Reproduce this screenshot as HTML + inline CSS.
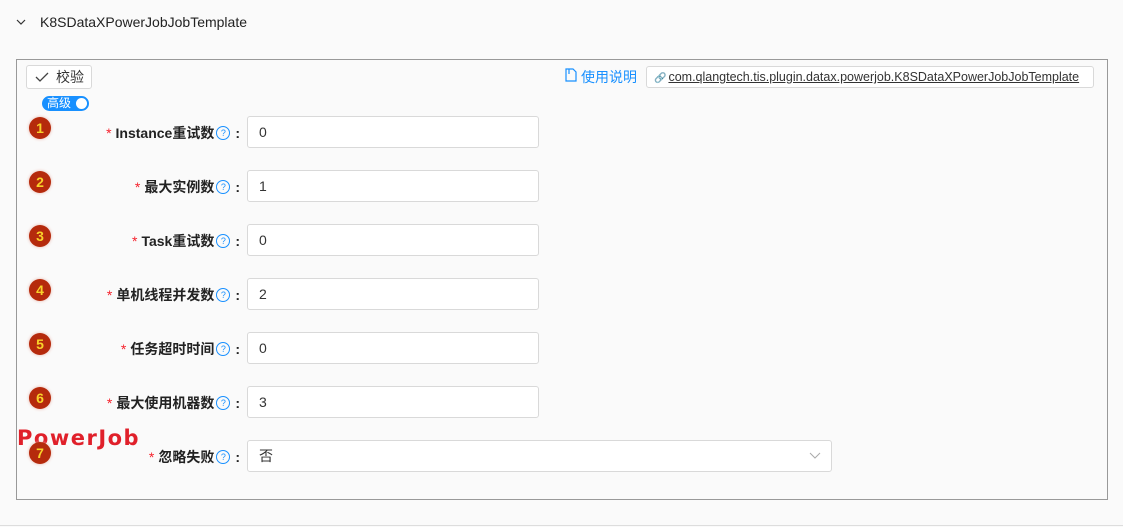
<!DOCTYPE html>
<html><head><meta charset="utf-8"><style>
body{margin:0;width:1123px;height:527px;background:#fafafa;font-family:"Liberation Sans","Noto Sans CJK SC",sans-serif;position:relative;overflow:hidden;color:#333}
.a{position:absolute}
.hdr{left:40px;top:14px;font-size:14px;color:#222}
.box{left:16px;top:59px;width:1090px;height:439px;border:1px solid #999;background:#fafafa}
.btn{left:26px;top:65px;width:64px;height:22px;border:1px solid #d9d9d9;border-radius:3px;background:#fff;font-size:14px;line-height:22px}
.tog{left:42px;top:96px;width:47px;height:15px;border-radius:8px;background:#1890ff;color:#fff;font-size:12px;line-height:15px}
.badge{width:22px;height:22px;border-radius:50%;background:#b52a0c;color:#f8d22a;font-weight:bold;font-size:14px;line-height:22px;text-align:center;box-shadow:0 0 3px #e8b4a8}
.lbl{width:240px;left:0;text-align:right;font-size:14px;font-weight:bold;color:#222}
.lbl b{color:#f5222d;font-weight:normal;margin-right:4px}
.q{display:inline-block;width:12px;height:12px;border:1px solid #1890ff;border-radius:50%;color:#1890ff;font-size:9px;line-height:12px;text-align:center;font-weight:normal;margin:0 5px 0 2px;vertical-align:2px}
.inp{left:247px;width:290px;height:30px;border:1px solid #d9d9d9;border-radius:3px;background:#fff;font-size:14px;line-height:30px;text-indent:11px;color:#333}
</style></head><body>
<svg class="a" style="left:16px;top:19px" width="10" height="7"><path d="M1 1 L5 5 L9 1" stroke="#333" fill="none" stroke-width="1.2"/></svg>
<div class="a hdr">K8SDataXPowerJobJobTemplate</div>
<div class="a" style="left:0;top:525px;width:1123px;height:1px;background:#ddd"></div>
<div class="a box"></div>
<div class="a btn"><svg class="a" style="left:8px;top:6px" width="14" height="10"><path d="M1 5 L5 9 L13 1" stroke="#444" fill="none" stroke-width="1.3"/></svg><span class="a" style="left:29px;top:0">校验</span></div>
<div class="a tog"><span style="margin-left:5px">高级</span><span class="a" style="right:2px;top:2px;width:11px;height:11px;border-radius:50%;background:#fff"></span></div>
<svg class="a" style="left:565px;top:68px" width="12" height="14"><path d="M1 1 H8 L11 4 V13 H1 Z M4 1 V6" stroke="#1890ff" fill="none" stroke-width="1.2"/></svg>
<div class="a" style="left:581px;top:67px;font-size:14px;color:#1890ff">使用说明</div>
<div class="a" style="left:646px;top:66px;width:446px;height:20px;border:1px solid #d9d9d9;border-radius:3px;background:#fff;font-size:12.5px;line-height:20px;color:#333"><span style="margin-left:7px;color:#666;font-size:10px">&#128279;</span><span style="text-decoration:underline;margin-left:2px">com.qlangtech.tis.plugin.datax.powerjob.K8SDataXPowerJobJobTemplate</span></div>

<div class="a badge" style="left:29px;top:117px">1</div>
<div class="a lbl" style="top:123px"><b>*</b>Instance重试数<span class="q">?</span>:</div>
<div class="a inp" style="top:116px">0</div>
<div class="a badge" style="left:29px;top:171px">2</div>
<div class="a lbl" style="top:177px"><b>*</b>最大实例数<span class="q">?</span>:</div>
<div class="a inp" style="top:170px">1</div>
<div class="a badge" style="left:29px;top:225px">3</div>
<div class="a lbl" style="top:231px"><b>*</b>Task重试数<span class="q">?</span>:</div>
<div class="a inp" style="top:224px">0</div>
<div class="a badge" style="left:29px;top:279px">4</div>
<div class="a lbl" style="top:285px"><b>*</b>单机线程并发数<span class="q">?</span>:</div>
<div class="a inp" style="top:278px">2</div>
<div class="a badge" style="left:29px;top:333px">5</div>
<div class="a lbl" style="top:339px"><b>*</b>任务超时时间<span class="q">?</span>:</div>
<div class="a inp" style="top:332px">0</div>
<div class="a badge" style="left:29px;top:387px">6</div>
<div class="a lbl" style="top:393px"><b>*</b>最大使用机器数<span class="q">?</span>:</div>
<div class="a inp" style="top:386px">3</div>
<div class="a" style="left:17px;top:426px;font-size:21px;font-weight:bold;color:#e0202a;letter-spacing:1.5px;font-family:'DejaVu Sans',sans-serif">PowerJob</div>
<div class="a badge" style="left:29px;top:442px">7</div>
<div class="a lbl" style="top:447px"><b>*</b>忽略失败<span class="q">?</span>:</div>
<div class="a inp" style="top:440px;width:583px">否</div>
<svg class="a" style="left:809px;top:452px" width="12" height="8"><path d="M1 1 L6 6 L11 1" stroke="#aaa" fill="none"/></svg>
</body></html>
